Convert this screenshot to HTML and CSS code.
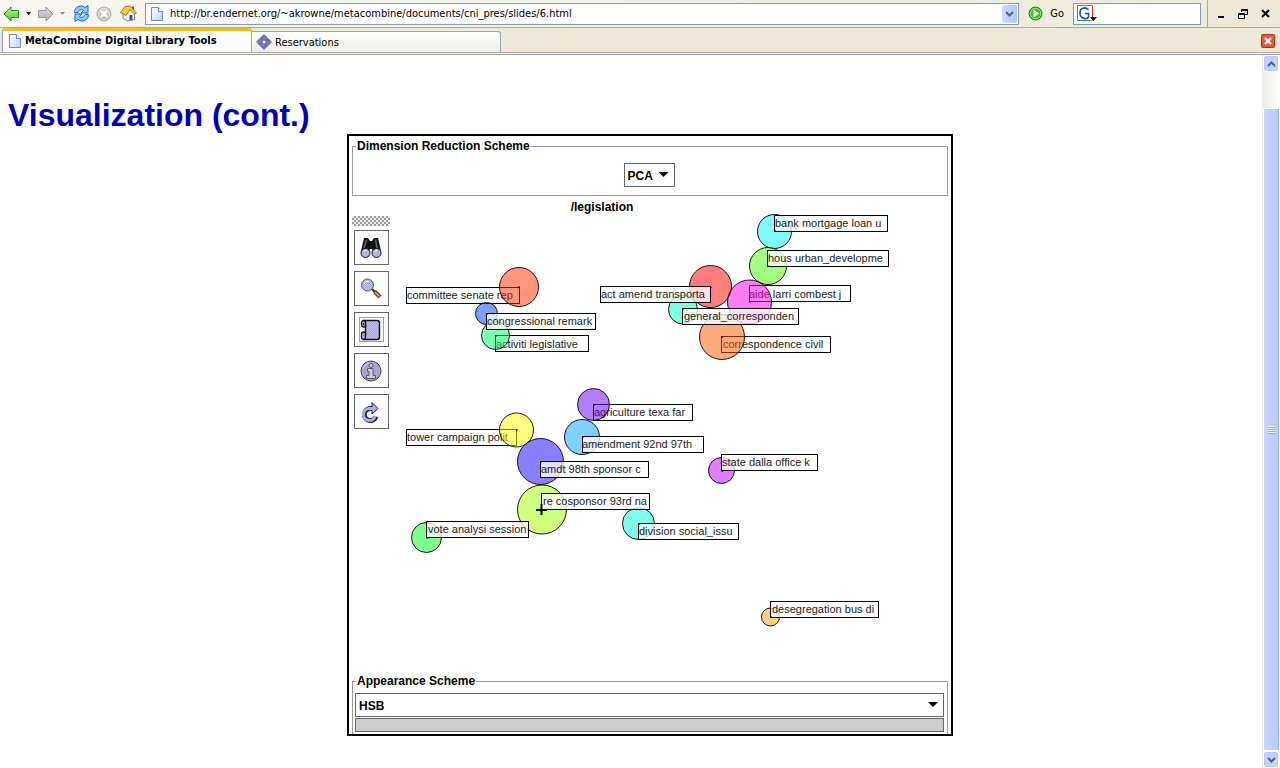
FILE: index.html
```html
<!DOCTYPE html>
<html lang="en">
<head>
<meta charset="utf-8">
<title>MetaCombine Digital Library Tools</title>
<link rel="stylesheet" href="styles.css">
</head>
<body>
<svg class="defs" width="0" height="0" aria-hidden="true">
  <defs>
    <linearGradient id="green" x1="0" y1="0" x2="0" y2="1"><stop offset="0" stop-color="#c4f5a8"/><stop offset="1" stop-color="#3ccf22"/></linearGradient>
    <linearGradient id="grey" x1="0" y1="0" x2="0" y2="1"><stop offset="0" stop-color="#dcdcdc"/><stop offset="1" stop-color="#adadad"/></linearGradient>
    <linearGradient id="paper" x1="0" y1="0" x2="1" y2="1"><stop offset="0" stop-color="#fff"/><stop offset="1" stop-color="#bcd2fa"/></linearGradient>
    <pattern id="hatch" width="2" height="2" patternUnits="userSpaceOnUse"><rect width="2" height="2" fill="#c4c4ec"/><path d="M0 0h1v1H0zM1 1h1v1H1z" fill="#a6a6cc"/></pattern>
    <symbol id="page" viewBox="0 0 12 14"><path d="M.5.5h7l4 4v9H.5z" fill="url(#paper)" stroke="#7189c4"/><path d="M7.500.5v4h4" fill="#fff" stroke="#7189c4"/></symbol>
  </defs>
</svg>

<header class="toolbar">
  <button class="tool" aria-label="Back"><svg width="17" height="16" viewBox="0 0 17 16"><path d="M1 8 8 1v3.500h7.500v7H8V15z" fill="url(#green)" stroke="#249214" stroke-linejoin="round"/></svg></button>
  <button class="tool caret" aria-label="Back history"><svg width="5" height="3"><path d="M0 0h5L2.500 3z"/></svg></button>
  <button class="tool" aria-label="Forward"><svg width="17" height="16" viewBox="0 0 17 16"><path d="M16 8 9 1v3.500H1.500v7H9V15z" fill="url(#grey)" stroke="#999" stroke-linejoin="round"/></svg></button>
  <button class="tool caret" aria-label="Forward history"><svg width="5" height="3"><path d="M0 0h5L2.500 3z" fill="#888"/></svg></button>
  <button class="tool reload" aria-label="Reload"><svg width="17" height="17" viewBox="0 0 17 17"><g stroke="#1668d2" stroke-linejoin="round" fill="#8ccbfc"><path d="M1.500 6.500C2.500 1 8.500-.5 12 2.500l3-2V8H8l2.500-2.500C8.500 3.800 5.500 5 5 7.500H1.500z"/><path d="M15.500 10.500C14.500 16 8.500 17.500 5 14.500l-3 2V9h7l-2.500 2.500c2 1.700 5 .5 5.500-2h3.500z"/></g></svg></button>
  <button class="tool wide" aria-label="Stop"><svg width="16" height="16" viewBox="0 0 16 16"><circle cx="8" cy="8" r="7" fill="url(#grey)" stroke="#a2a2a2"/><circle cx="8" cy="8" r="5.800" fill="none" stroke="#e2e2e2"/><path d="m5 5 6 6m0-6-6 6" stroke="#fff" stroke-width="2.400"/></svg></button>
  <button class="tool wide" aria-label="Home"><svg width="17" height="17" viewBox="0 0 17 17"><path d="M3 8v5.500L8 16l6.500-1.500V8L10 3z" fill="#eef3fc" stroke="#7283a8"/><path d="M12 1.500h2V7h-2z" fill="#a64b32"/><path d="M.5 7.500 5 1.500 10 1l6.500 7-2 1L10 4.500 6 10.500z" fill="#ffc844" stroke="#a87018" stroke-linejoin="round"/><path d="M9.500 10h3v4.500l-3 1z" fill="#45556f"/></svg></button>
  <div class="field address">
    <svg width="12" height="14" aria-hidden="true"><use href="#page"/></svg>
    <input type="text" aria-label="Address" value="http://br.endernet.org/~akrowne/metacombine/documents/cni_pres/slides/6.html">
    <button class="drop" aria-label="Show history"><svg width="9" height="6" viewBox="0 0 9 6"><path d="m1 1 3.500 3.500L8 1" fill="none" stroke="#4d6185" stroke-width="2"/></svg></button>
  </div>
  <button class="go"><svg width="15" height="15" viewBox="0 0 15 15"><circle cx="7.500" cy="7.500" r="6.500" fill="#37bd2c" stroke="#168516"/><circle cx="7.500" cy="7.500" r="5.200" fill="none" stroke="#99e48b"/><path d="M5.500 3.500 11 7.500l-5.500 4z" fill="#fff"/></svg><span>Go</span></button>
  <div class="field search">
    <button class="engine" aria-label="Search engine"><svg width="22" height="17" viewBox="0 0 22 17"><path d="M1.500 15.500v-15h15" fill="none" stroke="#2ba52b"/><path d="M16.500.5v15" stroke="#d22"/><path d="M1.500 15.500h14" stroke="#2ba52b"/><path d="M12.500 5C11 2 4 1.500 4 8s7 6.500 8.500 4V8.500H9" fill="none" stroke="#1d47c4" stroke-width="1.600"/><path d="M14 12h7l-3.500 4z"/></svg></button>
    <input type="text" aria-label="Search">
  </div>
  <div class="window">
    <button aria-label="Minimize"><svg width="8" height="10"><path d="M1 7h6v2H1z"/></svg></button>
    <button aria-label="Restore"><svg width="10" height="10" viewBox="0 0 10 10" fill="none" stroke="#000"><path d="M3.500 3V.5h6v5H7M3 1.500h7M.5 4.500h6v5h-6zM0 5.500h7"/></svg></button>
    <button aria-label="Close"><svg width="9" height="9"><path d="m1 1 7 7m0-7L1 8" stroke="#000" stroke-width="2"/></svg></button>
  </div>
</header>

<nav class="tabs">
  <a class="tab active" href="#"><svg width="12" height="14" aria-hidden="true"><use href="#page"/></svg><span>MetaCombine Digital Library Tools</span></a>
  <a class="tab" href="#"><svg width="16" height="16" viewBox="0 0 16 16" aria-hidden="true"><path d="m8 0 8 8-8 8-8-8z" fill="#6666ae"/><path d="M8 1v5M8 10v5M1 8h5M10 8h5M4.500 4.500v3M11.500 8.500v3M8.500 4.500h3M4.500 11.500h3" stroke="#8c8cc8"/><circle cx="8" cy="8" r="1.500" fill="#fff"/></svg><span>Reservations</span></a>
  <button class="close-tab" aria-label="Close tab"><svg width="14" height="14" viewBox="0 0 14 14"><rect x=".5" y=".5" width="13" height="13" rx="1" fill="#e2583f" stroke="#b52d18"/><path d="m4 4 6 6m0-6-6 6" stroke="#fff" stroke-width="2.200"/></svg></button>
</nav>

<div class="view">
  <main class="slide">
    <h1>Visualization (cont.)</h1>
    <section class="applet">
      <fieldset class="group reduction">
        <legend>Dimension Reduction Scheme</legend>
        <div class="select"><select aria-label="Dimension Reduction Scheme"><option>PCA</option></select></div>
      </fieldset>
      <h2>/legislation</h2>
      <div class="workspace">
        <div class="palette">
          <div class="grip"></div>
          <button aria-label="Find"><svg width="24" height="24" viewBox="0 0 24 24"><path d="M5 2h4l2 3h2l2-3h4l3 13-8 2-1-4h-2l-1 4-8-2z" fill="#111"/><path d="M7.500 4 5 12M16.500 4l1.500 8" stroke="#666" stroke-width="1.500"/><circle cx="6.500" cy="17" r="4.500" fill="#b4b4ea" stroke="#111"/><circle cx="17.500" cy="17" r="4.500" fill="#b4b4ea" stroke="#111"/><path d="M4.500 16q1-2 3-2M15.500 16q1-2 3-2" stroke="#fff" fill="none"/></svg></button>
          <button aria-label="Zoom"><svg width="24" height="24" viewBox="0 0 24 24"><path d="m13 12 3 3" stroke="#222" stroke-width="2"/><path d="m15.500 14.500 5.500 5.500" stroke="#5a3020" stroke-width="4"/><path d="m16 15 4.500 4.500" stroke="#dc9668" stroke-width="2"/><circle cx="8.500" cy="8" r="6" fill="url(#hatch)" stroke="#55556c"/><path d="M5 7.500q1-4 5-3" stroke="#fff" fill="none"/></svg></button>
          <button class="focused" aria-label="Log"><svg width="24" height="24" viewBox="0 0 24 24"><path d="M4.500 2.500H18q2.500 0 2.500 2.500v14q0 2.500-2.500 2.500H4.500q2-1 2-4v-11q0-3-2-4z" fill="url(#hatch)" stroke="#111" stroke-width="1.500"/><rect x="2.500" y="2.500" width="4" height="6.500" rx="2" fill="#aaaae0" stroke="#111" stroke-width="1.300"/><path d="M4.500 5v2M4.500 16.500v3" stroke="#111"/><rect x="2.500" y="14" width="4" height="7.500" rx="2" fill="#aaaae0" stroke="#111" stroke-width="1.300"/></svg></button>
          <button aria-label="Information"><svg width="24" height="24" viewBox="0 0 24 24"><circle cx="12" cy="12" r="10" fill="#aaa4c8" stroke="#444458"/><path d="M4 10q2-6 9-6" fill="none" stroke="#d6d2ea"/><circle cx="12" cy="6.500" r="2" fill="#d0cce6" stroke="#555570"/><path d="M8.500 9.500H14v7h2.500v3h-9v-3H10v-4H8.500z" fill="#d0cce6" stroke="#555570"/></svg></button>
          <button aria-label="Refresh"><svg width="24" height="24" viewBox="0 0 24 24"><path d="M17 16.500A6 6 0 1 1 11 8.500h2.500" fill="none" stroke="#222238" stroke-width="5"/><path d="m13 2.500 6 6-6 5.500z" fill="#a8b0e4" stroke="#222238"/><path d="M16.200 16.100A6 6 0 1 1 11 8.500h3" fill="none" stroke="#a8b0e4" stroke-width="3"/></svg></button>
        </div>
        <svg class="map" viewBox="392 216 556 458" role="img" aria-label="Topic clusters in legislation">
          <g class="label">
            <rect x="406.500" y="287.500" width="113" height="16"/><text x="407" y="299">committee senate rep</text>
            <rect x="495.500" y="335.500" width="93" height="16"/><text x="496" y="348">activiti legislative</text>
            <rect x="749.500" y="285.500" width="101" height="16"/><text x="749" y="298">aide larri combest j</text>
            <rect x="721.500" y="336.500" width="109" height="16"/><text x="723" y="348">correspondence civil</text>
            <rect x="593.500" y="404.500" width="99" height="16"/><text x="594" y="416">agriculture texa far</text>
            <rect x="406.500" y="429.500" width="110" height="16"/><text x="407" y="441">tower campaign polit</text>
          </g>
          <g class="bubble">
            <circle cx="774.500" cy="231.500" r="17" fill="#00f5ff"/>
            <circle cx="768" cy="266" r="18.500" fill="#48ff00"/>
            <circle cx="710.500" cy="286.500" r="21" fill="#f00"/>
            <circle cx="683" cy="309.500" r="14.500" fill="#00ffc0"/>
            <circle cx="749.500" cy="302" r="22" fill="#ff00e6"/>
            <circle cx="722" cy="337" r="22.500" fill="#ff5500"/>
            <circle cx="519" cy="287" r="19.500" fill="#ff2a00"/>
            <circle cx="486.500" cy="313.500" r="11" fill="#0040ff"/>
            <circle cx="495.500" cy="335.500" r="14" fill="#00ff66"/>
            <circle cx="593.500" cy="404.500" r="16" fill="#6600ff"/>
            <circle cx="582" cy="437" r="17.500" fill="#00a0ff"/>
            <circle cx="516.500" cy="430" r="17" fill="#ff0"/>
            <circle cx="540.500" cy="461.500" r="23" fill="#1500ff"/>
            <circle cx="542" cy="509.500" r="24.500" fill="#a0ff00"/>
            <circle cx="426.500" cy="537.500" r="15" fill="#00ff20"/>
            <circle cx="638.500" cy="523.500" r="16" fill="#00ffd5"/>
            <circle cx="721.500" cy="470.500" r="13" fill="#b800ff"/>
            <circle cx="770.500" cy="617" r="9" fill="#ffa500"/>
          </g>
          <g class="label">
            <rect x="774.500" y="215.500" width="113" height="16"/><text x="775" y="227">bank mortgage loan u</text>
            <rect x="767.500" y="250.500" width="121" height="16"/><text x="768" y="262">hous urban_developme</text>
            <rect x="600.500" y="286.500" width="110" height="16"/><text x="601" y="298">act amend transporta</text>
            <rect x="682.500" y="308.500" width="116" height="16"/><text x="684" y="320">general_corresponden</text>
            <rect x="486.500" y="313.500" width="109" height="16"/><text x="487" y="325">congressional remark</text>
            <rect x="582.500" y="436.500" width="121" height="16"/><text x="582" y="448">amendment 92nd 97th</text>
            <rect x="540.500" y="461.500" width="108" height="16"/><text x="541" y="473">amdt 98th sponsor c</text>
            <rect x="541.500" y="493.500" width="108" height="16"/><text x="543" y="505">re cosponsor 93rd na</text>
            <rect x="426.500" y="521.500" width="102" height="16"/><text x="428" y="533">vote analysi session</text>
            <rect x="638.500" y="523.500" width="100" height="16"/><text x="639" y="535">division social_issu</text>
            <rect x="721.500" y="454.500" width="96" height="16"/><text x="722" y="466">state dalla office k</text>
            <rect x="770.500" y="601.500" width="108" height="16"/><text x="772" y="613">desegregation bus di</text>
          </g>
          <path d="M536 510h11M541.500 504v11" stroke="#000" stroke-width="2"/>
          <path class="centers" d="M774 230h2v2h-2zM767 265h2v2h-2zM710 286h2v2h-2zM682 308h2v2h-2zM749 301h2v2h-2zM721 336h2v2h-2zM518 286h2v2h-2zM486 313h2v2h-2zM495 335h2v2h-2zM593 404h2v2h-2zM582 436h2v2h-2zM516 429h2v2h-2zM540 461h2v2h-2zM426 537h2v2h-2zM638 523h2v2h-2zM721 470h2v2h-2zM770 616h2v2h-2z"/>
        </svg>
      </div>
      <fieldset class="group appearance">
        <legend>Appearance Scheme</legend>
        <div class="select"><select aria-label="Appearance Scheme"><option>HSB</option></select></div>
        <div class="swatch"></div>
      </fieldset>
    </section>
  </main>
  <div class="scrollbar">
    <button aria-label="Scroll up"><svg width="9" height="6" viewBox="0 0 9 6"><path d="m1 5 3.500-3.500L8 5" fill="none" stroke="#4d6185" stroke-width="2"/></svg></button>
    <div class="track"><div class="thumb"></div></div>
    <button aria-label="Scroll down"><svg width="9" height="6" viewBox="0 0 9 6"><path d="m1 1 3.500 3.500L8 1" fill="none" stroke="#4d6185" stroke-width="2"/></svg></button>
  </div>
</div>
</body>
</html>
```

FILE: styles.css
```css
* { box-sizing: border-box; }

body {
  margin: 0;
  min-height: 100vh;
  display: flex;
  flex-direction: column;
  background: #fff;
  color: #000;
  font: 11px "DejaVu Sans Condensed", "DejaVu Sans", sans-serif;
}

button {
  display: flex;
  align-items: center;
  justify-content: center;
  padding: 0;
  border: 0;
  background: none;
  color: inherit;
  font: inherit;
}

svg { display: block; flex: none; }
.defs { position: absolute; }

/* Browser toolbar */
.toolbar {
  display: flex;
  align-items: center;
  height: 28px;
  padding-left: 2px;
  border-bottom: 1px solid #aca899;
  background: linear-gradient(90deg, #f8f7f1, #ece9d8);
}
.tool { width: 18px; height: 22px; }
.tool.caret { width: 16px; }
.tool.reload { width: 22px; }
.tool.wide { width: 24px; }
.field {
  display: flex;
  align-items: center;
  height: 22px;
  border: 1px solid #7f9db9;
  background: #fff;
}
.field input {
  flex: 1;
  min-width: 0;
  padding: 0;
  border: 0;
  outline: 0;
  background: none;
  font: inherit;
}
.address { flex: 1; gap: 7px; margin-left: 5px; padding: 0 1px 0 5px; }
.drop {
  width: 15px;
  height: 18px;
  border-radius: 2px;
  background: linear-gradient(90deg, #ccdafc, #b4c8f6);
}
.go { gap: 7px; padding: 0 9px; }
.search { width: 128px; padding-left: 2px; }
.window {
  display: flex;
  align-items: center;
  justify-content: space-between;
  width: 73px;
  height: 27px;
  margin-left: 6px;
  padding: 0 10px 0 9px;
  border-left: 1px solid #aca899;
}

/* Tab strip */
.tabs {
  display: flex;
  align-items: flex-end;
  height: 27px;
  padding: 0 5px 2px 2px;
  border-bottom: 1px solid #aca899;
  background: linear-gradient(#ece9d8 24px, #a7a6aa 24px, #a7a6aa 25px, #f3f1e6 25px);
}
.tab {
  display: flex;
  align-items: center;
  gap: 3px;
  width: 249px;
  height: 21px;
  padding: 0 4px;
  border: 1px solid #91a7b4;
  border-width: 1px 1px 0 0;
  border-radius: 0 3px 0 0;
  background: linear-gradient(#fefefc, #f0efe6);
  color: inherit;
  text-decoration: none;
}
.tab.active {
  gap: 4px;
  width: 250px;
  height: 24px;
  padding: 0 6px 2px;
  border-width: 0 1px;
  border-top: 3px solid #fbb52e;
  border-radius: 3px 3px 0 0;
  background: #fcfcfe;
  font-weight: bold;
}
.close-tab { margin: 0 0 4px auto; }

/* Page */
.view { flex: 1; display: flex; }
.slide {
  flex: 1;
  padding: 42px 8px 32px;
  font-family: "Liberation Sans", Arial, sans-serif;
}
h1 {
  margin: 0;
  color: #0000b4;
  font-size: 32px;
  line-height: 37px;
}
.applet {
  width: 606px;
  margin: 0 auto;
  padding: 3px 3px 0;
  border: 2px solid #000;
  translate: 19px;
}
.group {
  min-width: 0;
  margin: 0;
  padding: 10px 4px 8px 2px;
  border: 1px solid #999;
}
.group legend {
  margin-left: 1px;
  padding: 0 1px;
  font-size: 12px;
  font-weight: bold;
  line-height: 14px;
}
.select { position: relative; width: 51px; margin: 0 auto; }
.select select {
  appearance: none;
  display: block;
  width: 100%;
  height: 24px;
  padding: 1px 3px 0;
  border: 1px solid #666;
  border-radius: 0;
  background: #fff;
  color: #000;
  font: bold 12px "Liberation Sans", Arial, sans-serif;
}
.select::after {
  content: "";
  position: absolute;
  top: 9px;
  right: 6px;
  width: 10px;
  height: 5px;
  background: #000;
  clip-path: polygon(0 0, 100% 0, 50% 100%);
  pointer-events: none;
}
h2 {
  margin: 4px 96px 2px 0;
  font-size: 12px;
  line-height: 14px;
  text-align: center;
}
.workspace { display: flex; }
.palette {
  display: flex;
  flex-direction: column;
  align-items: center;
  gap: 6px;
  width: 40px;
  padding-right: 2px;
}
.grip {
  width: 38px;
  height: 10px;
  margin-bottom: -2px;
  background: repeating-conic-gradient(#999 0 25%, #eee 0 50%) 0 0 / 4px 4px;
}
.palette button { width: 35px; height: 35px; border: 1px solid #666; }
.palette .focused { outline: 1px solid #9999cc; outline-offset: -6px; }
.map { flex: 1; min-width: 0; overflow: visible; }
.label rect { fill: #fff; fill-opacity: .75; stroke: #000; }
.label text { font-size: 11px; fill: #222; }
.bubble circle { fill-opacity: .5; stroke: #000; stroke-opacity: .9; stroke-width: 1; }
.centers { fill: #000; fill-opacity: .5; }

.appearance { padding: 5px 3px 2px 2px; border-bottom: 0; }
.appearance .select { width: 100%; }
.swatch {
  height: 14px;
  margin-top: 1px;
  border: 1px solid #666;
  background: #ccc;
}

/* Scroll bar */
.scrollbar {
  display: flex;
  flex-direction: column;
  width: 18px;
  padding: 0 1px;
  background: linear-gradient(90deg, #eeede5, #fefefb);
}
.scrollbar button {
  width: 16px;
  height: 17px;
  border: 1px solid #fff;
  border-radius: 3px;
  background: #c3d3fd;
  box-shadow: inset 0 0 0 1px #b4c8f6;
}
.track { flex: 1; padding-top: 36px; }
.thumb {
  display: flex;
  align-items: center;
  justify-content: center;
  height: 100%;
  border: 1px solid #fff;
  border-right-color: #9ab4e4;
  border-radius: 2px;
  background: linear-gradient(90deg, #c9d7fc, #b8cbf9);
}
.thumb::before {
  content: "";
  width: 7px;
  height: 8px;
  background: repeating-linear-gradient(#eef4fe 0 1px, #8cb0f8 1px 2px);
}
```
